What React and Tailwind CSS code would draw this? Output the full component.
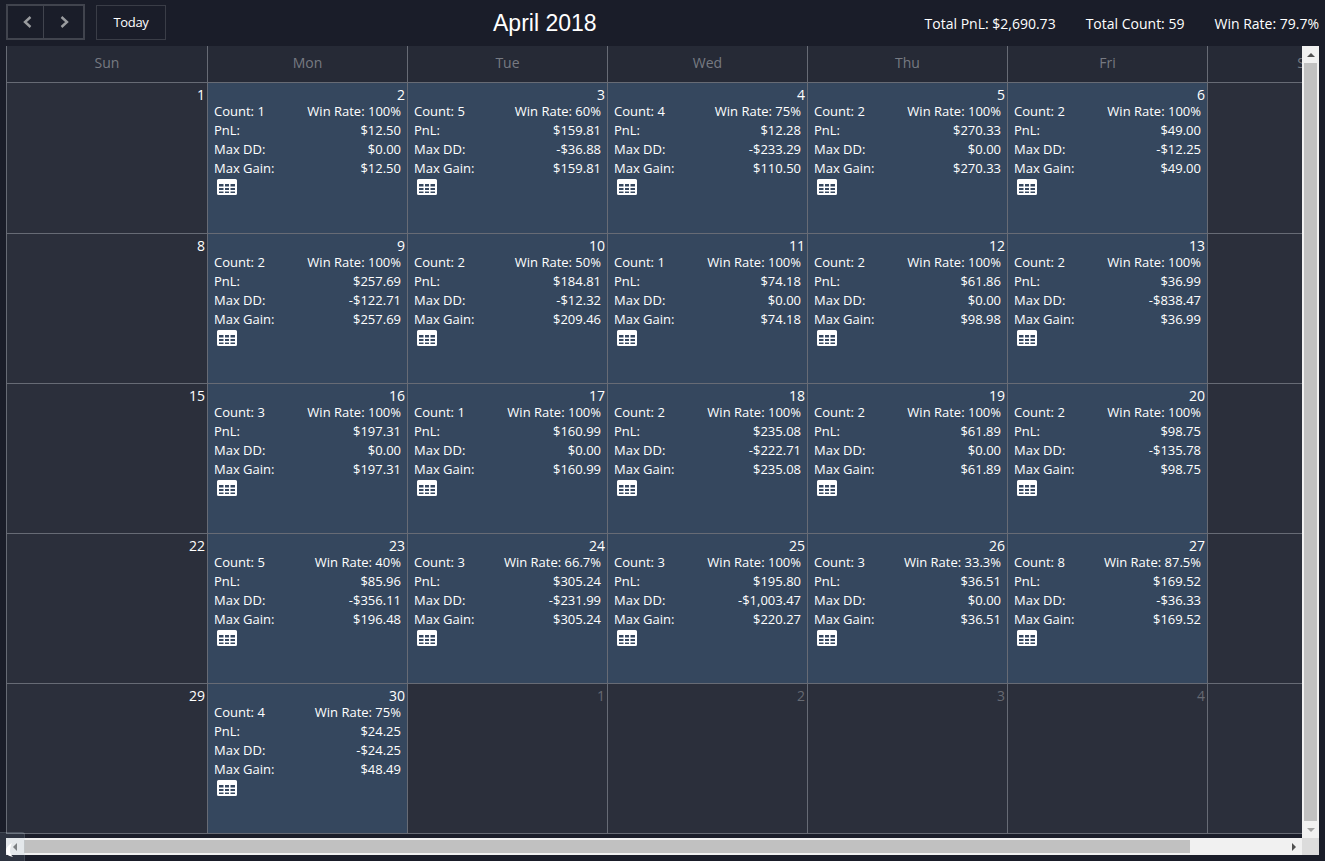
import React from "react";

const days = ["Sun", "Mon", "Tue", "Wed", "Thu", "Fri", "Sat"];

// [date, count, win rate, pnl, max dd, max gain]
const weeks = [
  [
    [1],
    [2, 1, "100%", "$12.50", "$0.00", "$12.50"],
    [3, 5, "60%", "$159.81", "-$36.88", "$159.81"],
    [4, 4, "75%", "$12.28", "-$233.29", "$110.50"],
    [5, 2, "100%", "$270.33", "$0.00", "$270.33"],
    [6, 2, "100%", "$49.00", "-$12.25", "$49.00"],
    [7],
  ],
  [
    [8],
    [9, 2, "100%", "$257.69", "-$122.71", "$257.69"],
    [10, 2, "50%", "$184.81", "-$12.32", "$209.46"],
    [11, 1, "100%", "$74.18", "$0.00", "$74.18"],
    [12, 2, "100%", "$61.86", "$0.00", "$98.98"],
    [13, 2, "100%", "$36.99", "-$838.47", "$36.99"],
    [14],
  ],
  [
    [15],
    [16, 3, "100%", "$197.31", "$0.00", "$197.31"],
    [17, 1, "100%", "$160.99", "$0.00", "$160.99"],
    [18, 2, "100%", "$235.08", "-$222.71", "$235.08"],
    [19, 2, "100%", "$61.89", "$0.00", "$61.89"],
    [20, 2, "100%", "$98.75", "-$135.78", "$98.75"],
    [21],
  ],
  [
    [22],
    [23, 5, "40%", "$85.96", "-$356.11", "$196.48"],
    [24, 3, "66.7%", "$305.24", "-$231.99", "$305.24"],
    [25, 3, "100%", "$195.80", "-$1,003.47", "$220.27"],
    [26, 3, "33.3%", "$36.51", "$0.00", "$36.51"],
    [27, 8, "87.5%", "$169.52", "-$36.33", "$169.52"],
    [28],
  ],
  [
    [29],
    [30, 4, "75%", "$24.25", "-$24.25", "$48.49"],
    [1, null, null, null, null, null, true],
    [2, null, null, null, null, null, true],
    [3, null, null, null, null, null, true],
    [4, null, null, null, null, null, true],
    [5, null, null, null, null, null, true],
  ],
];

function TableIcon() {
  return (
    <svg width="20" height="16" viewBox="0 0 20 16" className="block">
      <path
        fill="#fff"
        fillRule="evenodd"
        d="M1.5 0h17A1.5 1.5 0 0 1 20 1.500v13a1.500 1.500 0 0 1-1.500 1.500h-17A1.500 1.500 0 0 1 0 14.500v-13A1.500 1.500 0 0 1 1.500 0zM2 5v2.500h4.500V5zm6 0v2.500h4V5zm5.500 0v2.500H18V5zM2 9v2h4.500V9zm6 0v2h4V9zm5.500 0v2H18V9zM2 12.500V14h4.500v-1.500zm6 0V14h4v-1.500zm5.500 0V14H18v-1.500z"
      />
    </svg>
  );
}

function Chevron({ flip }) {
  return (
    <svg width="9" height="12" viewBox="0 0 9 12" className={flip ? "block rotate-180" : "block"}>
      <path d="M7.500 1 2 6l5.500 5" fill="none" stroke="#9a9c9f" strokeWidth="2.400" />
    </svg>
  );
}

function Row({ left, right }) {
  return (
    <div className="flex h-[19px] items-center justify-between whitespace-nowrap">
      <span>{left}</span>
      <span>{right}</span>
    </div>
  );
}

function DayCell({ cell, first, tall }) {
  const [date, count, win, pnl, dd, gain, muted] = cell;
  return (
    <div
      className={`border-r border-b border-[#676b75] ${tall ? "h-[151px]" : "h-[150px]"} ${
        first ? "border-l" : ""
      } ${count ? "bg-[#35475e]" : "bg-[#2b2f3b]"}`}
    >
      <div
        className={`h-[19px] pr-[2px] pt-[2px] text-right text-[14px] leading-[19px] ${
          muted ? "text-[#666a73]" : "text-white"
        }`}
      >
        {date}
      </div>
      {count && (
        <div className="px-[6px] text-[13px] text-white">
          <Row left={`Count: ${count}`} right={`Win Rate: ${win}`} />
          <Row left="PnL:" right={pnl} />
          <Row left="Max DD:" right={dd} />
          <Row left="Max Gain:" right={gain} />
          <div className="pl-[3px] pt-[1px]">
            <TableIcon />
          </div>
        </div>
      )}
    </div>
  );
}

export default function App() {
  return (
    <div className="relative flex h-[861px] w-[1325px] flex-col overflow-hidden bg-[#1a1d29] font-['Open_Sans',sans-serif] text-white">
      <div className="flex h-[46px] items-center pl-[6px] pr-[6px]">
        <div className="flex w-[487px] items-center gap-[11px] pb-[2px]">
          <div className="flex h-[36px] w-[79px] border-2 border-[#41444e]">
            <button className="flex w-[36px] items-center justify-center border-r border-[#41444e] pl-[3px]">
              <Chevron />
            </button>
            <button className="flex flex-1 items-center justify-center pl-[2px]">
              <Chevron flip />
            </button>
          </div>
          <button className="h-[35px] w-[70px] border border-[#3a3d47] pt-[1px] text-[13px] tracking-[-0.3px] text-white">
            Today
          </button>
        </div>
        <div className="font-['Liberation_Sans',sans-serif] text-[23px] leading-[46px] text-white">
          April 2018
        </div>
        <div className="flex flex-1 justify-end gap-[30px] text-[14px]">
          <span>Total PnL: $2,690.73</span>
          <span>Total Count: 59</span>
          <span>Win Rate: 79.7%</span>
        </div>
      </div>

      <div className="flex h-[792px] pl-[6px]">
        <div className="h-[792px] w-[1296px] overflow-hidden">
          <div className="grid w-[1402px] grid-cols-[202px_repeat(6,200px)]">
            {days.map((day, i) => (
              <div
                key={day}
                className={`flex h-[37px] items-center justify-center border-r border-b border-[#676b75] bg-[#262a36] pb-[4px] text-[14px] text-[#777a82] ${
                  i === 0 ? "border-l" : ""
                }`}
              >
                {day}
              </div>
            ))}
            {weeks.map((week, w) =>
              week.map((cell, i) => (
                <DayCell key={`${w}-${i}`} cell={cell} first={i === 0} tall={w === 0} />
              ))
            )}
          </div>
        </div>

        {/* vertical scrollbar */}
        <div className="flex h-[792px] w-[17px] flex-col bg-[#f1f1f1]">
          <div className="flex h-[17px] items-center justify-center">
            <div className="h-0 w-0 border-x-[4px] border-b-[4px] border-x-transparent border-b-[#505050]" />
          </div>
          <div className="mx-[2px] flex-1 bg-[#c1c1c1]" />
          <div className="flex h-[17px] items-center justify-center">
            <div className="h-0 w-0 border-x-[4px] border-t-[4px] border-x-transparent border-t-[#a3a3a3]" />
          </div>
        </div>
      </div>

      {/* horizontal scrollbar */}
      <div className="ml-[6px] flex h-[17px] w-[1313px]">
        <div className="flex h-[17px] w-[1296px] items-center bg-[#f1f1f1]">
          <div className="flex h-[17px] w-[18px] items-center justify-center">
            <div className="h-0 w-0 border-y-[4px] border-r-[4px] border-y-transparent border-r-[#777777]" />
          </div>
          <div className="h-[13px] w-[1166px] bg-[#c1c1c1]" />
          <div className="flex-1" />
          <div className="flex h-[17px] w-[17px] items-center justify-center">
            <div className="h-0 w-0 border-y-[4px] border-l-[4px] border-y-transparent border-l-[#505050]" />
          </div>
        </div>
        <div className="h-[17px] w-[17px] bg-[#dcdcdc]" />
      </div>

      {/* faint floating widget in the corner */}
      <div className="absolute bottom-0 left-0 h-[29px] w-[25px] rounded-tr-[3px] border-t border-r border-white/10 bg-[#9db4cc]/15">
        <svg width="8" height="14" viewBox="0 0 8 14" className="absolute left-[6px] top-[10px]">
          <path d="M6 0C2 2 0 5 0 8c0 3 2 5 7 6-2-2-3-4-3-6 0-3 1-6 2-8z" fill="#fff" />
        </svg>
      </div>
    </div>
  );
}
